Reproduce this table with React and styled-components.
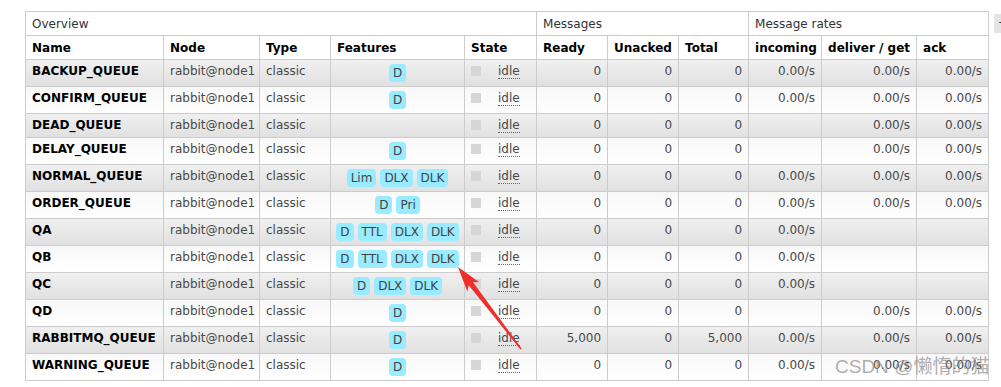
import React from "react";
import styled, { createGlobalStyle } from "styled-components";

const Global = createGlobalStyle`
  html, body { margin: 0; padding: 0; overflow: hidden; background: #fff; }
  body { font-family: "DejaVu Sans", Verdana, sans-serif; font-size: 12px; color: #484848; }
`;

const Page = styled.div`
  position: relative;
  width: 1001px;
  height: 387px;
  padding: 11px 0 0 25px;
  box-sizing: border-box;
  display: flex;
  align-items: flex-start;
  gap: 5px;
`;

const Table = styled.table`
  border-collapse: collapse;
  table-layout: fixed;
  width: 963px;
  flex: none;
`;

const GroupTh = styled.th`
  border: 1px solid #ccc;
  padding: 5px 6px 3px;
  height: 15px;
  line-height: 15px;
  font-weight: normal;
  text-align: left;
  color: #333;
  background: #fff;
`;

const ColTh = styled.th`
  border: 1px solid #ccc;
  padding: 5px 6px 3px;
  line-height: 15px;
  font-weight: bold;
  text-align: left;
  color: #000;
  background: #fff;
  white-space: nowrap;
  overflow: hidden;
`;

const Row = styled.tr`
  background: ${(p) =>
    p.$alt
      ? "linear-gradient(#f0f0f0, #e0e0e0)"
      : "linear-gradient(#f8f8f8, #ffffff)"};
`;

const Td = styled.td`
  border: 1px solid #ccc;
  padding: 4px 6px;
  line-height: 15px;
  vertical-align: top;
  white-space: nowrap;
  overflow: hidden;
  text-align: ${(p) => p.$align || "left"};
  color: ${(p) => (p.$strong ? "#000" : "#484848")};
  font-weight: ${(p) => (p.$strong ? "bold" : "normal")};
`;

const Badges = styled.div`
  display: flex;
  justify-content: center;
  gap: 4px;
`;

const Badge = styled.span`
  display: inline-block;
  height: 18px;
  line-height: 18px;
  padding: 0 4px;
  border-radius: 4px;
  background: #99ebff;
  color: #444;
  font-size: 12px;
`;

const StateBox = styled.div`
  display: flex;
  align-items: flex-start;
`;

const Square = styled.span`
  display: block;
  width: 10px;
  height: 10px;
  margin-top: 2px;
  background: #d6d6d6;
  flex: none;
`;

const Idle = styled.abbr`
  margin-left: 17px;
  text-decoration: none;
  border-bottom: 1px dotted #666;
  line-height: 14px;
  color: #484848;
`;

const ColumnToggle = styled.div`
  margin-top: 3px;
  flex: none;
  width: 22px;
  height: 19px;
  line-height: 19px;
  padding: 0 4px;
  background: #e4e4e4;
  color: #333;
  font-size: 12px;
`;

const Arrow = styled.svg`
  position: absolute;
  left: 0;
  top: 0;
  pointer-events: none;
`;

const Watermark = styled.div`
  position: absolute;
  left: 835px;
  top: 354px;
  font-family: "Liberation Sans", "Noto Sans CJK SC", sans-serif;
  font-size: 19px;
  line-height: 26px;
  color: rgba(140, 140, 140, 0.7);
  white-space: nowrap;
  pointer-events: none;
`;

const r = "0.00/s";
const rows = [
  ["BACKUP_QUEUE", ["D"], "0", "0", "0", r, r, r],
  ["CONFIRM_QUEUE", ["D"], "0", "0", "0", r, r, r],
  ["DEAD_QUEUE", [], "0", "0", "0", "", r, r],
  ["DELAY_QUEUE", ["D"], "0", "0", "0", "", r, r],
  ["NORMAL_QUEUE", ["Lim", "DLX", "DLK"], "0", "0", "0", r, r, r],
  ["ORDER_QUEUE", ["D", "Pri"], "0", "0", "0", r, r, r],
  ["QA", ["D", "TTL", "DLX", "DLK"], "0", "0", "0", r, "", ""],
  ["QB", ["D", "TTL", "DLX", "DLK"], "0", "0", "0", r, "", ""],
  ["QC", ["D", "DLX", "DLK"], "0", "0", "0", r, "", ""],
  ["QD", ["D"], "0", "0", "0", "", r, r],
  ["RABBITMQ_QUEUE", ["D"], "5,000", "0", "5,000", r, r, r],
  ["WARNING_QUEUE", ["D"], "0", "0", "0", r, r, r],
];

const widths = [138, 96, 71, 134, 72, 71, 71, 70, 73, 95, 72];
const heads = ["Name", "Node", "Type", "Features", "State", "Ready", "Unacked", "Total", "incoming", "deliver / get", "ack"];

// arrow geometry
const tip = [458, 267];
const tail = [521, 349];
const dx = tail[0] - tip[0];
const dy = tail[1] - tip[1];
const len = Math.hypot(dx, dy);
const u = [dx / len, dy / len];
const n = [-u[1], u[0]];
const pt = (base, along, side) => [base[0] + u[0] * along + n[0] * side, base[1] + u[1] * along + n[1] * side];
const headBase = pt(tip, 22, 0);
const arrowPts = [
  tip,
  pt(headBase, 3, 7.5),
  pt(headBase, -1, 2.6),
  pt(tail, 0, 0.7),
  pt(tail, 0, -0.7),
  pt(headBase, -1, -2.6),
  pt(headBase, 3, -7.5),
].map((p) => p.map((v) => v.toFixed(1)).join(",")).join(" ");

export default function App() {
  return (
    <>
      <Global />
      <Page>
        <Table>
          <colgroup>
            {widths.map((w, i) => (
              <col key={i} style={{ width: w }} />
            ))}
          </colgroup>
          <thead>
            <tr>
              <GroupTh colSpan={5}>Overview</GroupTh>
              <GroupTh colSpan={3}>Messages</GroupTh>
              <GroupTh colSpan={3}>Message rates</GroupTh>
            </tr>
            <tr>
              {heads.map((h) => (
                <ColTh key={h}>{h}</ColTh>
              ))}
            </tr>
          </thead>
          <tbody>
            {rows.map((row, i) => (
              <Row key={row[0]} $alt={i % 2 === 0}>
                <Td $strong>{row[0]}</Td>
                <Td>rabbit@node1</Td>
                <Td>classic</Td>
                <Td>
                  {row[1].length > 0 && (
                    <Badges>
                      {row[1].map((b) => (
                        <Badge key={b}>{b}</Badge>
                      ))}
                    </Badges>
                  )}
                </Td>
                <Td>
                  <StateBox>
                    <Square />
                    <Idle title="idle">idle</Idle>
                  </StateBox>
                </Td>
                <Td $align="right">{row[2]}</Td>
                <Td $align="right">{row[3]}</Td>
                <Td $align="right">{row[4]}</Td>
                <Td $align="right">{row[5]}</Td>
                <Td $align="right">{row[6]}</Td>
                <Td $align="right">{row[7]}</Td>
              </Row>
            ))}
          </tbody>
        </Table>
        <ColumnToggle>+/-</ColumnToggle>
        <Arrow width="1001" height="387" viewBox="0 0 1001 387">
          <polygon points={arrowPts} fill="#ee2f2c" />
        </Arrow>
        <Watermark>CSDN @懒惰的猫</Watermark>
      </Page>
    </>
  );
}
